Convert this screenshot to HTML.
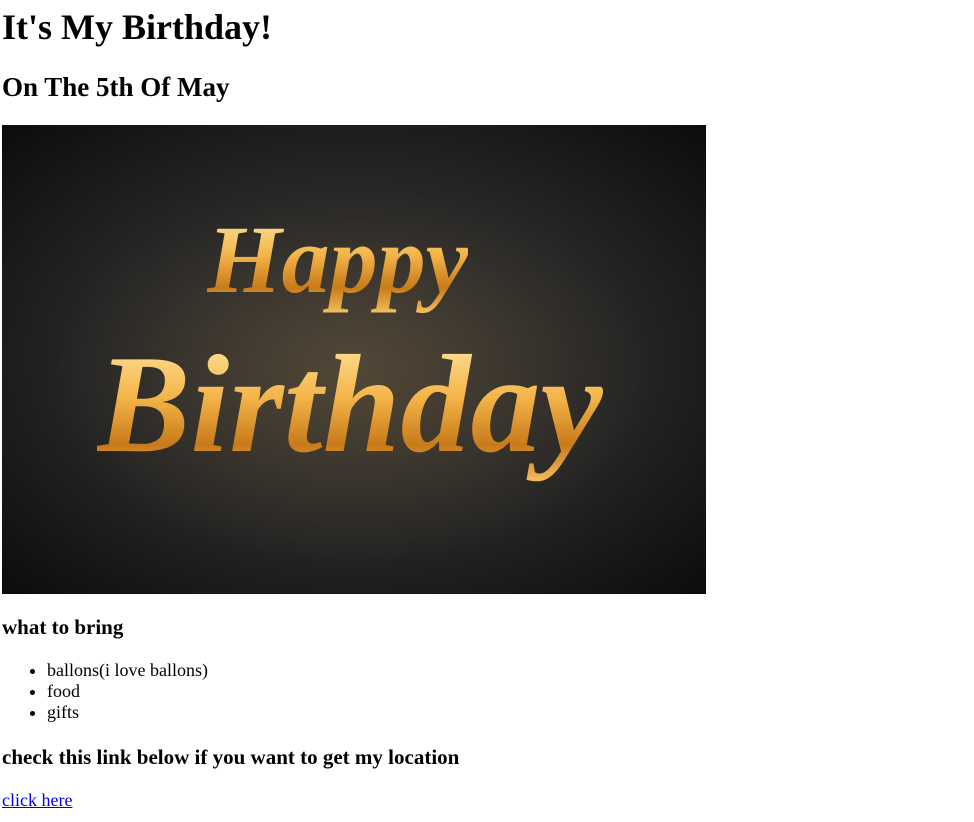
<!DOCTYPE html>
<html><head><meta charset="utf-8"><style>
html,body{margin:0;padding:0;background:#fff;width:974px;height:822px;overflow:hidden;font-family:"Liberation Serif",serif;color:#000}
.t{position:absolute;left:2px;white-space:nowrap;font-weight:bold;margin:0}
h1.t{font-size:36px;top:7px;line-height:40px}
h2.t{font-size:27px;top:71px;line-height:32px}
h3.t{font-size:21px;line-height:24px}
ul{position:absolute;left:0;top:660px;margin:0;padding-left:47px;font-size:18px;line-height:21px}
a{position:absolute;left:2px;top:790px;font-size:18px;color:#00e;text-decoration:underline}
.img{position:absolute;left:2px;top:125px;width:704px;height:469px;background:radial-gradient(ellipse at 50% 50%,#363636 0%,#252525 55%,#0c0c0c 100%);overflow:hidden}
.w{position:absolute;font-family:"Liberation Serif",serif;font-style:italic;font-weight:bold;background:linear-gradient(180deg,#fff0b0 0%,#f4b54a 45%,#c87a1a 75%,#f7c464 100%);-webkit-background-clip:text;background-clip:text;color:transparent}
</style></head><body>
<h1 class="t">It's My Birthday!</h1>
<h2 class="t">On The 5th Of May</h2>
<div class="img">
<svg width="704" height="469" style="position:absolute;left:0;top:0">
<defs><radialGradient id="g" cx="50%" cy="50%" r="50%"><stop offset="0" stop-color="#c8903a" stop-opacity=".2"/><stop offset="1" stop-color="#c8903a" stop-opacity="0"/></radialGradient></defs>
<ellipse cx="352" cy="250" rx="300" ry="190" fill="url(#g)"/>
</svg>
<div class="w" style="left:205px;top:80px;font-size:96px;line-height:110px">Happy</div>
<div class="w" style="left:95px;top:200px;font-size:140px;line-height:160px">Birthday</div>
</div>
<h3 class="t" style="top:615px">what to bring</h3>
<ul><li>ballons(i love ballons)</li><li>food</li><li>gifts</li></ul>
<h3 class="t" style="top:745px">check this link below if you want to get my location</h3>
<a href="#">click here</a>
</body></html>
